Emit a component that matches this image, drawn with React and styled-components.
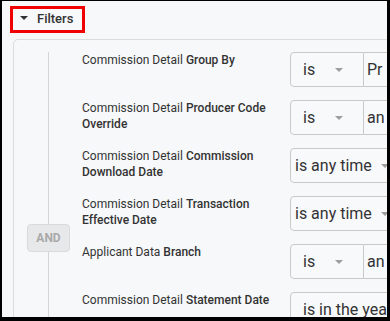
import React from "react";
import styled, { createGlobalStyle } from "styled-components";

const Global = createGlobalStyle`
  html, body { margin: 0; padding: 0; background: #000; }
  #root { width: 390px; height: 321px; }
`;

const Frame = styled.div`
  width: 390px;
  height: 321px;
  box-sizing: border-box;
  border-style: solid;
  border-color: #000;
  border-width: 1px 3px 4px 2px;
  background: #f7f8fa;
  overflow: hidden;
  font-family: Roboto, "Noto Sans", "Liberation Sans", sans-serif;
  color: #333;
`;

const Header = styled.div`
  padding: 4px 0 0 8px;
  height: 38px;
  box-sizing: border-box;
`;

const Toggle = styled.div`
  display: inline-flex;
  align-items: center;
  gap: 9px;
  box-sizing: border-box;
  height: 27px;
  width: 75px;
  border: 3px solid #f00000;
  padding: 0 0 3px 7px;
  font-size: 13px;
  font-weight: 500;
  color: #333;
`;

const Panel = styled.div`
  margin-left: 11px;
  width: 620px;
  border: 1px solid #dcdcdc;
  border-radius: 5px;
  padding-top: 12px;
  display: flex;
`;

const AndCol = styled.div`
  position: relative;
  width: 68px;
  flex: none;
  display: flex;
  align-items: center;
  justify-content: center;
  &::before {
    content: "";
    position: absolute;
    left: 34px;
    top: 0;
    bottom: 0;
    width: 1px;
    background: #d6d6d6;
  }
`;

const AndBadge = styled.div`
  position: relative;
  z-index: 1;
  width: 43px;
  height: 28px;
  box-sizing: border-box;
  border: 1px solid #dadada;
  border-radius: 4px;
  background: #e7e8ea;
  color: #a9a9a9;
  font-size: 12px;
  font-weight: 700;
  display: flex;
  align-items: center;
  justify-content: center;
  margin-left: 1px;
`;

const Rows = styled.div`
  display: flex;
  flex-direction: column;
  gap: 13px;
`;

const Row = styled.div`
  display: flex;
  align-items: flex-start;
  gap: 12px;
`;

const Label = styled.div`
  width: 196px;
  flex: none;
  font-size: 12px;
  line-height: 16px;
  color: #333;
  b {
    font-weight: 500;
  }
`;

const Field = styled.div`
  display: flex;
  height: 35px;
`;

const Select = styled.div`
  box-sizing: border-box;
  height: 35px;
  width: ${(p) => p.$w}px;
  flex: none;
  display: flex;
  align-items: center;
  justify-content: space-between;
  padding: 0 ${(p) => p.$pr}px 0 ${(p) => p.$pl}px;
  border: 1px solid #c9c9c9;
  border-radius: ${(p) => (p.$joined ? "4px 0 0 4px" : "4px")};
  background: #f8f9fb;
  font-size: 16px;
  color: #333;
`;

const TextBox = styled.div`
  box-sizing: border-box;
  height: 35px;
  width: 200px;
  flex: none;
  display: flex;
  align-items: center;
  padding-left: 3px;
  border: 1px solid #c9c9c9;
  border-left: none;
  border-radius: 0 4px 4px 0;
  background: #f8f9fb;
  font-size: 16px;
  color: #333;
`;

const Caret = ({ color = "#9e9e9e", w = 8 }) => (
  <svg width={w} height={w / 2} viewBox="0 0 8 4" style={{ flex: "none" }}>
    <polygon points="0,0 8,0 4,4" fill={color} />
  </svg>
);

const rows = [
  { pre: "Commission Detail ", bold: "Group By", kind: "is", value: "Pr" },
  { pre: "Commission Detail ", bold: "Producer Code Override", kind: "is", value: "an" },
  { pre: "Commission Detail ", bold: "Commission Download Date", kind: "time", value: "is any time" },
  { pre: "Commission Detail ", bold: "Transaction Effective Date", kind: "time", value: "is any time" },
  { pre: "Applicant Data ", bold: "Branch", kind: "is", value: "an" },
  { pre: "Commission Detail ", bold: "Statement Date", kind: "year", value: "is in the year" },
  { pre: "Commission Detail ", bold: "Carrier Name", kind: "is", value: "an" },
  { pre: "Commission Detail ", bold: "Policy Number", kind: "is", value: "an" },
];

function FieldFor({ r }) {
  if (r.kind === "is") {
    return (
      <Field>
        <Select $w={74} $pl={12} $pr={20} $joined>
          <span>is</span>
          <Caret />
        </Select>
        <TextBox>{r.value}</TextBox>
      </Field>
    );
  }
  if (r.kind === "time") {
    return (
      <Field>
        <Select $w={112} $pl={4} $pr={12}>
          <span>{r.value}</span>
          <Caret />
        </Select>
      </Field>
    );
  }
  return (
    <Field>
      <Select $w={150} $pl={12} $pr={12}>
        <span>{r.value}</span>
        <Caret />
      </Select>
    </Field>
  );
}

export default function App() {
  return (
    <>
      <Global />
      <Frame>
        <Header>
          <Toggle>
            <Caret color="#333" w={8} />
            <span>Filters</span>
          </Toggle>
        </Header>
        <Panel>
          <AndCol>
            <AndBadge>AND</AndBadge>
          </AndCol>
          <Rows>
            {rows.map((r, i) => (
              <Row key={i}>
                <Label>
                  {r.pre}
                  <b>{r.bold}</b>
                </Label>
                <FieldFor r={r} />
              </Row>
            ))}
          </Rows>
        </Panel>
      </Frame>
    </>
  );
}
